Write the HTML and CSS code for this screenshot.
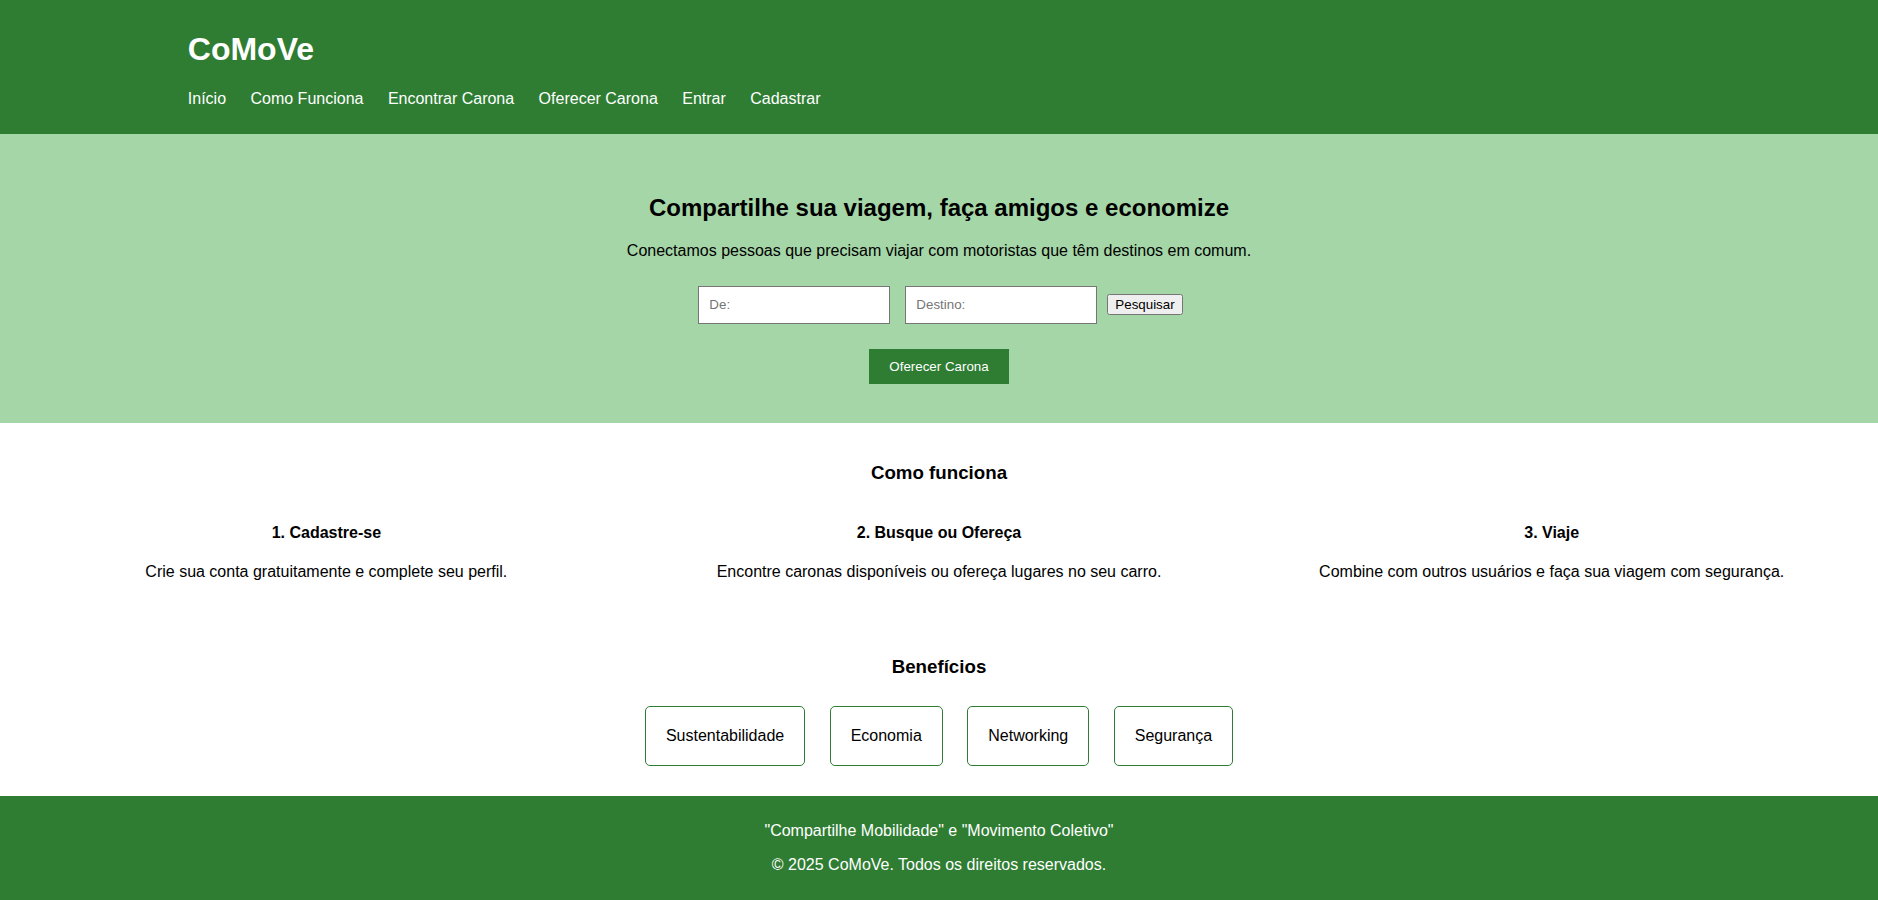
FILE: index.html
```html
<!DOCTYPE html>
<html lang="pt-BR">
<head>
<meta charset="utf-8">
<title>CoMoVe</title>
<link rel="stylesheet" href="styles.css">
</head>
<body>
<header class="site-header">
  <div class="container">
    <h1 class="logo">CoMoVe</h1>
    <nav>
      <ul class="nav-list">
        <li><a href="#">Início</a></li>
        <li><a href="#">Como Funciona</a></li>
        <li><a href="#">Encontrar Carona</a></li>
        <li><a href="#">Oferecer Carona</a></li>
        <li><a href="#">Entrar</a></li>
        <li><a href="#">Cadastrar</a></li>
      </ul>
    </nav>
  </div>
</header>

<section class="hero">
  <h2 class="hero-title">Compartilhe sua viagem, faça amigos e economize</h2>
  <p class="hero-text">Conectamos pessoas que precisam viajar com motoristas que têm destinos em comum.</p>
  <form class="search-form">
    <input class="search-input first" type="text" placeholder="De:">
    <input class="search-input" type="text" placeholder="Destino:">
    <button class="search-button" type="button">Pesquisar</button>
  </form>
  <div class="offer-wrap">
    <a class="offer-button" href="#">Oferecer Carona</a>
  </div>
</section>

<section class="how">
  <h3 class="section-title">Como funciona</h3>
  <div class="steps">
    <div class="step">
      <h4 class="step-title">1. Cadastre-se</h4>
      <p class="step-text">Crie sua conta gratuitamente e complete seu perfil.</p>
    </div>
    <div class="step">
      <h4 class="step-title">2. Busque ou Ofereça</h4>
      <p class="step-text">Encontre caronas disponíveis ou ofereça lugares no seu carro.</p>
    </div>
    <div class="step">
      <h4 class="step-title">3. Viaje</h4>
      <p class="step-text">Combine com outros usuários e faça sua viagem com segurança.</p>
    </div>
  </div>
</section>

<section class="benefits">
  <h3 class="section-title">Benefícios</h3>
  <div class="benefit-list">
    <div class="benefit">Sustentabilidade</div>
    <div class="benefit">Economia</div>
    <div class="benefit">Networking</div>
    <div class="benefit">Segurança</div>
  </div>
</section>

<footer class="site-footer">
  <p class="footer-line">"Compartilhe Mobilidade" e "Movimento Coletivo"</p>
  <p class="footer-line">© 2025 CoMoVe. Todos os direitos reservados.</p>
</footer>
</body>
</html>
```

FILE: styles.css
```css
html, body {
  margin: 0;
  padding: 0;
}

body {
  font-family: "Liberation Sans", Arial, sans-serif;
  font-size: 16px;
  color: #000;
  background: #fff;
}

.site-header {
  background: #2e7d32;
  color: #fff;
  padding: 10px 0;
}

.container {
  width: 80%;
  margin: 0 auto;
}

.logo {
  font-size: 32px;
  font-weight: bold;
  margin: 21.44px 0;
}

.nav-list {
  list-style: none;
  margin: 16px 0;
  padding: 0;
  display: flex;
  gap: 24.45px;
}

.nav-list a {
  color: #fff;
  text-decoration: none;
}

.hero {
  background: #a5d6a7;
  text-align: center;
  padding: 40px 20px 39px;
}

.hero-title {
  font-size: 24px;
  font-weight: bold;
  margin: 19.92px 0;
}

.hero-text {
  margin: 16px 0;
}

.search-form {
  display: flex;
  justify-content: center;
  align-items: center;
  margin: 26px 0 0;
  padding-left: 3px;
}

.search-input {
  box-sizing: border-box;
  width: 192px;
  height: 38px;
  padding: 10px;
  border: 1px solid #767676;
  border-radius: 0;
  background: #fff;
  font-family: "Liberation Sans", Arial, sans-serif;
  font-size: 13.333px;
  margin: 0;
}

.search-input.first {
  margin-right: 15px;
}

.search-input::placeholder {
  color: #757575;
}

.search-button {
  margin-left: 10px;
  font-family: "Liberation Sans", Arial, sans-serif;
  font-size: 13.333px;
}

.offer-wrap {
  display: flex;
  justify-content: center;
  margin-top: 25px;
}

.offer-button {
  display: block;
  background: #2e7d32;
  color: #fff;
  text-decoration: none;
  font-size: 13.333px;
  line-height: 15.33px;
  padding: 10px 20px;
}

.how,
.benefits {
  padding: 20px;
  text-align: center;
}

.section-title {
  font-size: 18.72px;
  font-weight: bold;
  margin: 18.72px 0;
}

.steps {
  display: flex;
}

.step {
  flex: 1;
}

.step-title {
  font-size: 16px;
  font-weight: bold;
  margin: 21.28px 0;
}

.step-text {
  margin: 16px 0;
}

.benefit-list {
  display: flex;
  justify-content: center;
  gap: 24.45px;
  padding: 10px 0;
}

.benefit {
  border: 1px solid #2e7d32;
  border-radius: 5px;
  padding: 20px;
}

.site-footer {
  background: #2e7d32;
  color: #fff;
  text-align: center;
  padding: 10px;
}

.footer-line {
  margin: 16px 0;
}
```
